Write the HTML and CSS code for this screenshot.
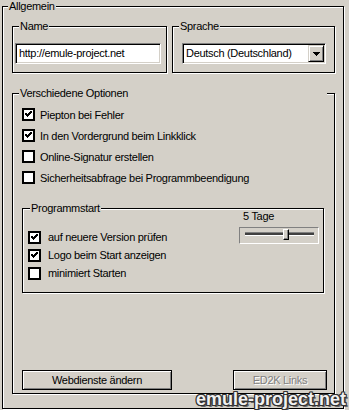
FILE: index.html
```html
<!DOCTYPE html>
<html lang="de">
<head>
    <meta charset="UTF-8">
    <meta name="viewport" content="width=device-width, initial-scale=1.0">
    <title>Allgemein</title>
    <link rel="stylesheet" href="styles.css">
</head>
<body>
    <div class="group outer">
        <span class="caption">Allgemein</span>
        <div class="top-row">
            <div class="group name-box">
                <span class="caption">Name</span>
                <div class="textbox">http://emule-project.net</div>
            </div>
            <div class="group lang-box">
                <span class="caption">Sprache</span>
                <div class="combo">
                    <span class="combo-text">Deutsch (Deutschland)</span>
                    <span class="combo-btn">
                        <svg width="7" height="4" viewBox="0 0 7 4"><path d="M0 0h7v1h-1v1h-1v1h-1v1h-1v-1h-1v-1h-1v-1h-1z" fill="#000"/></svg>
                    </span>
                </div>
            </div>
        </div>

        <div class="group options">
            <span class="caption">Verschiedene Optionen</span>
            <div class="checks">
                <div class="check on"><span class="box"><svg width="9" height="9" viewBox="0 0 9 9"><path d="M1.5 3.5 L3.5 5.5 L7.5 1.5" /></svg></span>Piepton bei Fehler</div>
                <div class="check on"><span class="box"><svg width="9" height="9" viewBox="0 0 9 9"><path d="M1.5 3.5 L3.5 5.5 L7.5 1.5" /></svg></span>In den Vordergrund beim Linkklick</div>
                <div class="check"><span class="box"></span>Online-Signatur erstellen</div>
                <div class="check"><span class="box"></span>Sicherheitsabfrage bei Programmbeendigung</div>
            </div>

            <div class="group startup">
                <div class="startup-left">
                    <span class="caption">Programmstart</span>
                    <div class="checks small">
                        <div class="check on"><span class="box"><svg width="9" height="9" viewBox="0 0 9 9"><path d="M1.5 3.5 L3.5 5.5 L7.5 1.5" /></svg></span>auf neuere Version prüfen</div>
                        <div class="check on"><span class="box"><svg width="9" height="9" viewBox="0 0 9 9"><path d="M1.5 3.5 L3.5 5.5 L7.5 1.5" /></svg></span>Logo beim Start anzeigen</div>
                        <div class="check"><span class="box"></span>minimiert Starten</div>
                    </div>
                </div>
                <div class="startup-right">
                    <div class="days">5 Tage</div>
                    <div class="slider">
                        <div class="track"></div>
                        <div class="thumb"></div>
                    </div>
                </div>
            </div>

            <div class="buttons">
                <button class="btn wide">Webdienste ändern</button>
                <button class="btn disabled">ED2K Links</button>
            </div>
        </div>
    </div>
    <div class="watermark">emule-project.net</div>
</body>
</html>
```

FILE: styles.css
```css
body {
    margin: 0;
    width: 349px;
    height: 410px;
    overflow: hidden;
    position: relative;
    background-color: #d4d0c8;
    color: #000;
    font-family: "Liberation Sans", Arial, sans-serif;
    font-size: 11px;
    letter-spacing: -0.3px;
}
.group {
    box-sizing: border-box;
    border: 1px solid #000;
    box-shadow: 1px 1px 0 #fff, inset 1px 1px 0 #fff;
}
.caption {
    display: table;
    margin-top: -7px;
    padding: 0 1px;
    background-color: #d4d0c8;
    line-height: 13px;
    white-space: nowrap;
}
.outer {
    margin: 6px 0 0 2px;
    width: 342px;
    height: 403px;
    padding-left: 9px;
}
.outer > .caption {
    margin-left: -4px;
}
.top-row {
    display: flex;
    gap: 5px;
    margin-top: 13px;
}
.name-box {
    width: 155px;
    height: 47px;
    padding-left: 2px;
}
.name-box .caption {
    margin-left: 4px;
}
.lang-box {
    width: 163px;
    height: 47px;
    padding-left: 9px;
}
.lang-box .caption {
    margin-left: -3px;
}
.textbox,
.combo {
    box-sizing: border-box;
    margin-top: 10px;
    height: 21px;
    background: #fff;
    border: 1px solid;
    border-color: #808080 #fff #fff #808080;
    box-shadow: inset 1px 1px 0 #000, inset -1px -1px 0 #d4d0c8;
    line-height: 19px;
    white-space: nowrap;
}
.textbox {
    width: 146px;
    padding-left: 3px;
}
.combo {
    width: 144px;
    display: flex;
    padding: 1px 1px 1px 3px;
    line-height: 17px;
}
.combo-text {
    flex: 1;
}
.combo-btn {
    box-sizing: border-box;
    width: 16px;
    height: 17px;
    display: flex;
    align-items: center;
    justify-content: center;
    background: #d4d0c8;
    border: 1px solid;
    border-color: #d4d0c8 #000 #000 #d4d0c8;
    box-shadow: inset 1px 1px 0 #fff, inset -1px -1px 0 #808080;
}
.combo-btn svg {
    shape-rendering: crispEdges;
    margin-top: 1px;
}
.options {
    margin-top: 20px;
    width: 323px;
    height: 301px;
    padding: 0 7px 3px 9px;
    display: flex;
    flex-direction: column;
}
.options > .caption {
    margin-left: -3px;
}
.checks {
    margin-top: 4px;
}
.check {
    display: flex;
    align-items: center;
    height: 21px;
    white-space: nowrap;
}
.box {
    box-sizing: border-box;
    width: 13px;
    height: 13px;
    margin-right: 5px;
    background: #fff;
    border: 2px solid #000;
    display: flex;
    align-items: center;
    justify-content: center;
}
.box svg path {
    fill: none;
    stroke: #000;
    stroke-width: 2.2;
    shape-rendering: crispEdges;
}
.startup {
    margin-top: 20px;
    width: 302px;
    height: 85px;
    padding-left: 5px;
    display: flex;
}
.startup-left .caption {
    margin-left: 2px;
}
.checks.small {
    margin-top: 13px;
}
.checks.small .check {
    height: 18px;
}
.checks.small .box {
    margin-right: 7px;
}
.startup-right {
    margin-left: auto;
    margin-right: 4px;
    padding-top: 1px;
}
.days {
    margin-left: 4px;
    line-height: 13px;
}
.slider {
    position: relative;
    box-sizing: border-box;
    margin-top: 4px;
    width: 80px;
    height: 17px;
    border: 1px solid;
    border-color: #808080 #fff #fff #808080;
    padding: 4px 0 0 5px;
}
.track {
    width: 69px;
    height: 2px;
    background: #404040;
    border-top: 1px solid #808080;
    border-bottom: 1px solid #fff;
}
.thumb {
    position: absolute;
    left: 43px;
    top: 1px;
    box-sizing: border-box;
    width: 6px;
    height: 11px;
    background: #d4d0c8;
    border: 1px solid;
    border-color: #fff #000 #000 #fff;
    box-shadow: inset -1px -1px 0 #808080;
}
.buttons {
    margin-top: auto;
    display: flex;
    justify-content: space-between;
}
.btn {
    box-sizing: border-box;
    height: 20px;
    width: 94px;
    padding: 0;
    background: #d4d0c8;
    border: 1px solid #000;
    box-shadow: inset 1px 1px 0 #fff, inset -1px -1px 0 #808080;
    font-family: "Liberation Sans", Arial, sans-serif;
    font-size: 11px;
    letter-spacing: -0.3px;
    color: #000;
}
.btn.wide {
    width: 150px;
}
.btn.disabled {
    color: #808080;
    text-shadow: 1px 1px 0 #fff;
}
.watermark {
    position: absolute;
    left: 196px;
    top: 390px;
    line-height: 18px;
    font-size: 18px;
    font-weight: bold;
    letter-spacing: 0;
    color: #f0f0f0;
    white-space: nowrap;
    text-shadow: 1px 0 0 #333, -1px 0 0 #333, 0 1px 0 #333, 0 -1px 0 #333,
        1px 1px 0 #333, -1px -1px 0 #333, 1px -1px 0 #333, -1px 1px 0 #333,
        2px 2px 0 #666;
}
```
